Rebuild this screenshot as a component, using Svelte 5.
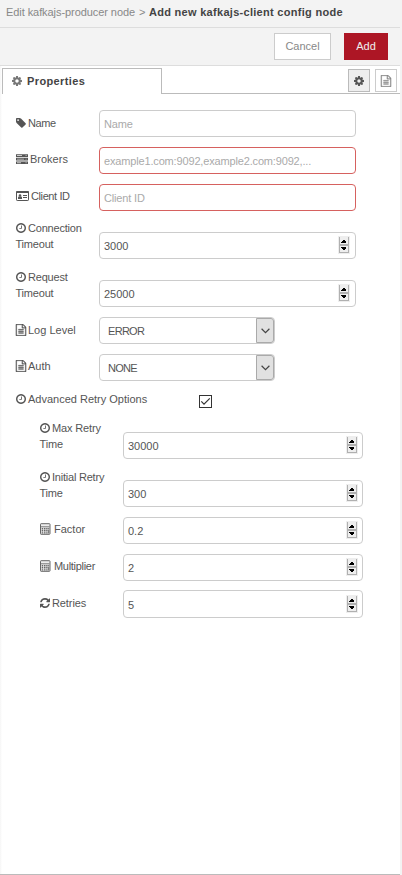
<script>
  const paths = {
    cog: 'M1152 896q0-106-75-181t-181-75-181 75-75 181 75 181 181 75 181-75 75-181zm512-109v222q0 12-8 23t-20 13l-185 28q-19 54-39 91 35 50 107 138 10 12 10 25t-9 23q-27 37-99 108t-94 71q-12 0-26-9l-138-108q-44 23-91 38-16 136-29 186-7 28-36 28h-222q-14 0-24.5-8.5t-11.5-21.5l-28-184q-49-16-90-37l-141 107q-10 9-25 9-14 0-25-11-126-114-165-168-7-10-7-23 0-12 8-23 15-21 51-66.5t54-70.5q-27-50-41-99l-183-27q-13-2-21-12.5t-8-23.5v-222q0-12 8-23t19-13l186-28q14-46 39-92-40-57-107-138-10-12-10-24 0-10 9-23 26-36 98.5-107.5t94.5-71.5q13 0 26 10l138 107q44-23 91-38 16-136 29-186 7-28 36-28h222q14 0 24.5 8.5t11.5 21.5l28 184q49 16 90 37l142-107q9-9 24-9 13 0 25 10 129 119 165 170 7 8 7 22 0 12-8 23-15 21-51 66.5t-54 70.5q26 50 41 98l183 28q13 2 21 12.5t8 23.5z',
    tag: 'M576 448q0-53-37.5-90.5t-90.5-37.5-90.5 37.5-37.5 90.5 37.5 90.5 90.5 37.5 90.5-37.5 37.5-90.5zm1067 576q0 53-37 90l-491 492q-39 37-91 37-53 0-90-37l-715-716q-38-37-64.5-101t-26.5-117v-416q0-52 38-90t90-38h416q53 0 117 26.5t102 64.5l715 714q37 39 37 91z',
    clock: 'M1024 544v448q0 14-9 23t-23 9h-320q-14 0-23-9t-9-23v-64q0-14 9-23t23-9h224v-352q0-14 9-23t23-9h64q14 0 23 9t9 23zm416 352q0-148-73-273t-198-198-273-73-273 73-198 198-73 273 73 273 198 198 273 73 273-73 198-198 73-273zm224 0q0 209-103 385.5t-279.5 279.5-385.5 103-385.5-103-279.5-279.5-103-385.5 103-385.5 279.5-279.5 385.5-103 385.5 103 279.5 279.5 103 385.5z',
    refresh: 'M1639 1056q0 5-1 7-64 268-268 434.5t-478 166.5q-146 0-282.5-55t-243.5-157l-129 129q-19 19-45 19t-45-19-19-45v-448q0-26 19-45t45-19h448q26 0 45 19t19 45-19 45l-137 137q71 66 161 102t187 36q134 0 250-65t186-179q11-17 53-117 8-23 30-23h192q13 0 22.5 9.5t9.5 22.5zm25-800v448q0 26-19 45t-45 19h-448q-26 0-45-19t-19-45 19-45l138-138q-148-137-349-137-134 0-250 65t-186 179q-11 17-53 117-8 23-30 23h-199q-13 0-22.5-9.5t-9.5-22.5v-7q65-268 270-434.5t480-166.5q146 0 284 55.5t245 156.5l130-129q19-19 45-19t45 19 19 45z',
    file: 'M1596 380q28 28 48 76t20 88v1152q0 40-28 68t-68 28h-1344q-40 0-68-28t-28-68v-1600q0-40 28-68t68-28h896q40 0 88 20t76 48zm-444-244v376h376q-10-29-22-41l-313-313q-12-12-41-22zm384 1528v-1024h-416q-40 0-68-28t-28-68v-416h-768v1536h1280zm-1024-864q0-14 9-23t23-9h704q14 0 23 9t9 23v64q0 14-9 23t-23 9h-704q-14 0-23-9t-9-23v-64zm736 224q14 0 23 9t9 23v64q0 14-9 23t-23 9h-704q-14 0-23-9t-9-23v-64q0-14 9-23t23-9h704zm0 256q14 0 23 9t9 23v64q0 14-9 23t-23 9h-704q-14 0-23-9t-9-23v-64q0-14 9-23t23-9h704z'
  };

  const main = [
    { icon: 'tag', label: 'Name', placeholder: 'Name', track: -0.4 },
    { icon: 'server', label: 'Brokers', placeholder: 'example1.com:9092,example2.com:9092,...', invalid: true, track: 0 },
    { icon: 'card', label: 'Client ID', placeholder: 'Client ID', invalid: true, track: -0.4 },
    { icon: 'clock', label: 'Connection', second: 'Timeout', number: '3000', track: -0.2 },
    { icon: 'clock', label: 'Request', second: 'Timeout', number: '25000', track: -0.2, low: true },
    { icon: 'file', label: 'Log Level', select: 'ERROR', track: 0, low: true },
    { icon: 'file', label: 'Auth', select: 'NONE', track: 0 }
  ];
  const retry = [
    { icon: 'clock', label: 'Max Retry', second: 'Time', number: '30000', track: -0.15 },
    { icon: 'clock', label: 'Initial Retry', second: 'Time', number: '300', track: -0.22, low: true },
    { icon: 'calc', label: 'Factor', number: '0.2', track: 0 },
    { icon: 'calc', label: 'Multiplier', number: '2', track: -0.3 },
    { icon: 'refresh', label: 'Retries', number: '5', track: -0.1 }
  ];
</script>

{#snippet icon(name)}
  {#if name === 'server'}
    <svg class="icon server" width="12" height="12" viewBox="0 0 12 12">
      <path fill="#555" d="M0 1.2h12v2.7H0zM0 4.8h12v2.7H0zM0 8.4h12v2.7H0z" />
      <path fill="#ccc" d="M1 2.1h5v.9H1zM1 5.7h7v.9H1zM1 9.3h4v.9H1zM9.6 2.1h1v.9h-1zM9.6 5.7h1v.9h-1zM9.6 9.3h1v.9h-1z" />
    </svg>
  {:else if name === 'card'}
    <svg class="icon card" width="13" height="12" viewBox="0 0 13 12">
      <rect x=".5" y="2" width="12" height="8.5" rx=".7" fill="#fff" stroke="#555" />
      <path fill="#555" d="M0 1.8q0-.8.8-.8h11.4q.8 0 .8.8V3H0z" />
      <circle cx="4" cy="5.5" r="1.3" fill="#555" />
      <path fill="#555" d="M2 9V7.6q0-1 1-1h2q1 0 1 1V9zM7 5h4v1H7zM7 7h4v1H7z" />
    </svg>
  {:else if name === 'calc'}
    <svg class="icon calc" width="11" height="12" viewBox="0 0 11 12">
      <rect x=".5" y=".7" width="9.5" height="10.6" rx=".6" fill="#eee" stroke="#666" />
      <path fill="#777" d="M1 3.3h8.5v1H1z" />
      <path fill="#666" d="M1.7 5h1.5v1.4H1.7zM4 5h1.5v1.4H4zM6.2 5h1.4v1.4H6.2zM1.7 7.1h1.5v1.4H1.7zM4 7.1h1.5v1.4H4zM6.2 7.1h1.4v1.4H6.2zM1.7 9.2h1.5v1.2H1.7zM4 9.2h1.5v1.2H4zM6.2 9.2h1.4v1.2H6.2zM8.2 5h1v1.4h-1zM8.2 7.1h1v3.3h-1z" />
    </svg>
  {:else}
    <svg class="icon {name}" width="12" height="12" viewBox={name === 'file' ? '0 0 1792 1792' : '128 128 1536 1536'}>
      <path fill="currentColor" stroke={name === 'file' ? 'currentColor' : 'none'} stroke-width="40" fill-rule={name === 'tag' ? 'evenodd' : 'nonzero'} d={paths[name]} />
    </svg>
  {/if}
{/snippet}

{#snippet field(row)}
  <div class="row" class:double={row.second} class:tight={row.icon !== 'tag' && !row.second} class:low={row.low}>
    <div class="label" style="letter-spacing: {row.track}px">
      <div class="line">{@render icon(row.icon)}<span>{row.label}</span></div>
      {#if row.second}<div class="line">{row.second}</div>{/if}
    </div>
    {#if row.select}
      <div class="control select">
        <span>{row.select}</span>
        <div class="arrow">
          <svg width="9" height="6" viewBox="0 0 9 6"><path d="M.6.8 4.5 4.6 8.4.8" fill="none" stroke="#444" stroke-width="1.2" /></svg>
        </div>
      </div>
    {:else}
      <div class="control" class:invalid={row.invalid}>
        {#if row.number}
          <span>{row.number}</span>
          <svg class="spinner" width="12" height="18" viewBox="0 0 12 18" shape-rendering="crispEdges">
            <path fill="#eee" d="M0 0h12v18H0z" />
            <path fill="#b0b0b0" d="M1 1h1v16H1zM10 1h1v16h-1zM1 8h10v2H1zM1 16h10v1H1z" />
            <path fill="#000" d="M5 4h2v1H5zM4 5h4v1H4zM3 6h5v1H3zM3 11h5v1H3zM4 12h4v1H4zM5 13h2v1H5z" />
          </svg>
        {:else}
          <span class="hint">{row.placeholder}</span>
        {/if}
      </div>
    {/if}
  </div>
{/snippet}

<div class="tray">
  <header><span class="parent">Edit kafkajs-producer node</span><span class="gt">&gt;</span><b>Add new kafkajs-client config node</b></header>
  <div class="toolbar">
    <div class="btn">Cancel</div>
    <div class="btn primary">Add</div>
  </div>
  <div class="tabs">
    <div class="tab">{@render icon('cog')}<b>Properties</b></div>
    <div class="fill">
      <div class="mini active">{@render icon('cog')}</div>
      <div class="mini">{@render icon('file')}</div>
    </div>
  </div>
  <main>
    {#each main as row}{@render field(row)}{/each}
    <div class="advanced">
      <div class="line">{@render icon('clock')}<span>Advanced Retry Options</span></div>
      <svg class="check" width="13" height="13" viewBox="0 0 13 13">
        <rect x=".5" y=".5" width="12" height="12" fill="#fff" stroke="#333" />
        <path d="M2.3 6.4 5 9.2 10.8 3.3" fill="none" stroke="#333" stroke-width="1.2" />
      </svg>
    </div>
    <div class="nested">
      {#each retry as row}{@render field(row)}{/each}
    </div>
  </main>
</div>

<style>
  :global(body) { background: #f3f3f3; }
  .tray {
    box-sizing: border-box;
    width: 400px;
    height: 875px;
    display: flex;
    flex-direction: column;
    background: linear-gradient(90deg, #f5f5f5, #fff 2px);
    border-bottom: 1px solid #bbb;
    font: 11px/16px "Liberation Sans", Arial, sans-serif;
    color: #555;
    white-space: nowrap;
  }
  header {
    box-sizing: border-box;
    height: 28px;
    padding: 4px 0 0 6px;
    display: flex;
    background: #f3f3f3;
    border-bottom: 1px solid #ddd;
  }
  .parent, .gt { color: #888; }
  .parent { width: 133px; letter-spacing: -0.07px; }
  .gt { width: 10px; }
  header b { color: #444; letter-spacing: 0.29px; }
  .toolbar {
    box-sizing: border-box;
    height: 38px;
    padding: 5px 12px 0;
    display: flex;
    justify-content: flex-end;
    gap: 13px;
    background: #f3f3f3;
    border-bottom: 1px solid #ddd;
  }
  .btn {
    box-sizing: border-box;
    width: 57px;
    height: 27px;
    border: 1px solid #ccc;
    background: #fff;
    color: #888;
    text-align: center;
    line-height: 25px;
  }
  .primary { width: 44px; background: #ad1625; border-color: #ad1625; color: #eee; }
  .tabs { height: 28px; display: flex; padding-left: 2px; }
  .tab {
    box-sizing: border-box;
    width: 160px;
    margin-top: 2px;
    padding: 0 0 2px 9px;
    display: flex;
    align-items: center;
    border: 1px solid #bbb;
    border-bottom: 0;
    background: #fff;
    color: #777;
  }
  .tab .icon { width: 10px; height: 10px; margin-right: 5px; }
  .tab b { color: #444; letter-spacing: 0.38px; }
  .fill {
    box-sizing: border-box;
    flex: 1;
    padding: 3px 3px 0 0;
    display: flex;
    justify-content: flex-end;
    gap: 5px;
    border-bottom: 1px solid #bbb;
  }
  .mini {
    box-sizing: border-box;
    width: 22px;
    height: 23px;
    display: flex;
    align-items: center;
    justify-content: center;
    border: 1px solid #ccc;
    color: #888;
  }
  .mini .icon { margin: 0; }
  .mini .cog { width: 10px; height: 10px; }
  .active { background: #eee; border-color: #bbb; color: #555; }
  main { padding: 16px 0 0 15.5px; }
  .row { height: 37px; display: flex; align-items: flex-start; }
  .label { width: 83.5px; padding-top: 5px; }
  .tight .label { padding-top: 4px; }
  .tight.low .label { padding-top: 5px; }
  .line { height: 16px; display: flex; align-items: center; }
  .icon { flex: none; width: 10px; height: 10px; margin-right: 2.5px; }
  .icon.server { width: 12px; height: 12px; }
  .icon.card { width: 13px; height: 12px; }
  .icon.calc { width: 11px; height: 12px; margin-right: 3.5px; }
  .icon.file { width: 12px; height: 12px; margin: 0 1.5px 0 -1px; }
  .mini .icon.file { margin: 0; }
  .double { height: 48px; }
  .double .label { padding-top: 0; margin-top: -1px; }
  .double.low .label { margin-top: 0; }
  .double .control { margin-top: 11px; }
  .control {
    box-sizing: border-box;
    width: 257px;
    height: 27px;
    padding: 1px 5px 0 4px;
    display: flex;
    align-items: center;
    justify-content: space-between;
    border: 1px solid #ccc;
    border-radius: 4px;
    background: #fff;
  }
  .invalid { border-color: #d6615f; padding-top: 0; }
  .hint { color: #aaa; letter-spacing: -0.16px; }
  .spinner { margin-top: -2px; }
  .select { width: 176px; padding: 0 0 0 8px; }
  .select span { letter-spacing: -0.7px; }
  .arrow {
    box-sizing: border-box;
    width: 18px;
    height: 25px;
    display: flex;
    align-items: center;
    justify-content: center;
    border: 1px solid #aaa;
    border-radius: 0 3px 3px 0;
    background: #e1e1e1;
  }
  .advanced { height: 30px; display: flex; align-items: flex-start; }
  .advanced .line { width: 183.5px; }
  .check { margin-top: 4px; }
  .nested { padding-left: 24px; }
  .nested .control { width: 240px; padding-right: 4px; }
  .nested .row:last-child { margin-top: -1px; }
  .nested .row:last-child .label { padding-top: 5px; }
  .nested .row:last-child .control { height: 28px; }
</style>
